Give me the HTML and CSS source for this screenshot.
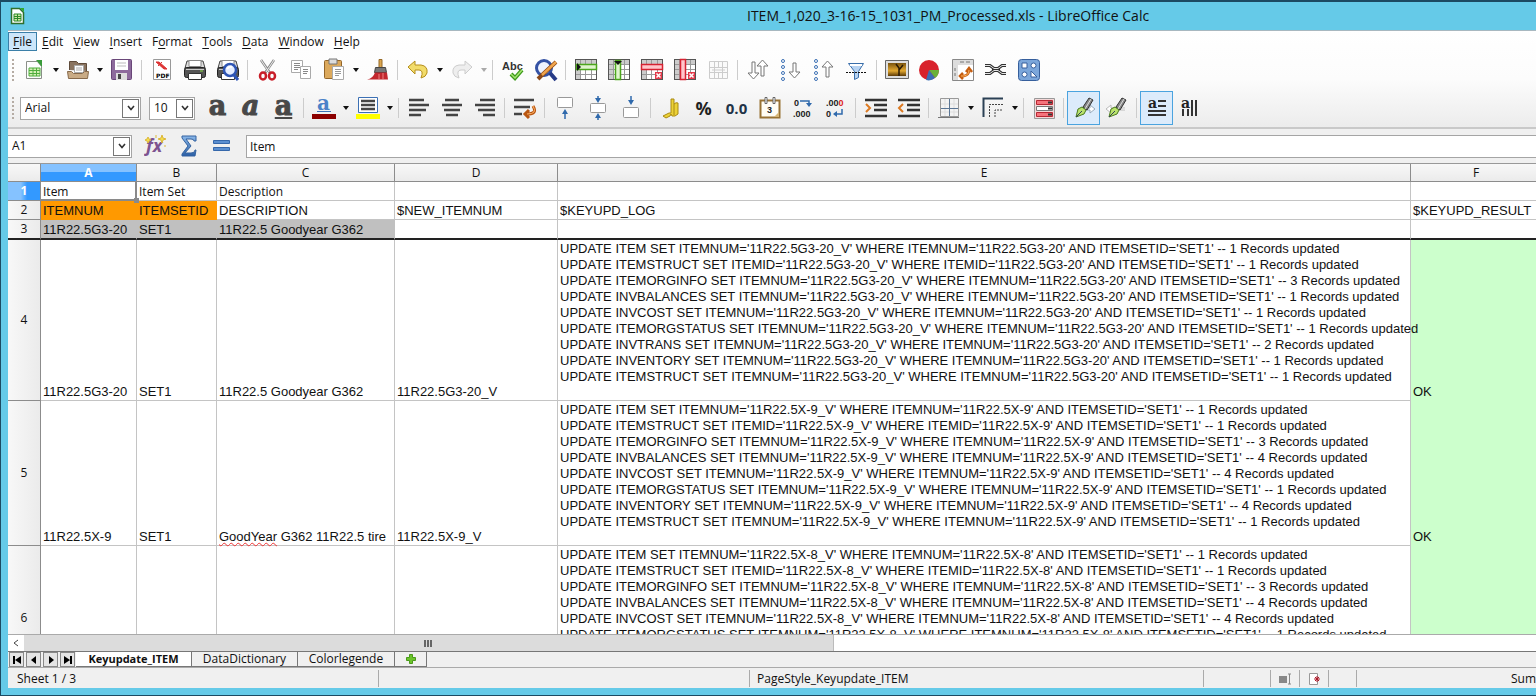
FILE: index.html
```html
<!DOCTYPE html>
<html lang="en">
<head>
<meta charset="utf-8">
<title>ITEM_1,020_3-16-15_1031_PM_Processed.xls - LibreOffice Calc</title>
<link rel="stylesheet" href="styles.css">
</head>
<body>
<svg class="defs" aria-hidden="true">
  <defs>
    <linearGradient id="blue" x1="0" y1="0" x2="0" y2="1"><stop offset="0" stop-color="#8ab8ea"/><stop offset="1" stop-color="#2a5fa5"/></linearGradient>
    <linearGradient id="gold" x1="0" y1="0" x2="0" y2="1"><stop offset="0" stop-color="#7a5410"/><stop offset=".6" stop-color="#e2a830"/><stop offset="1" stop-color="#5c3a08"/></linearGradient>
    <symbol id="grid" viewBox="0 0 24 24"><rect x="1.500" y="1.500" width="21" height="20" fill="#fff" stroke="#555"/><path d="M2 2h20v4H2zM2 6h4v15H2z" fill="#ccc"/><path d="M2 6.500h20M2 11.500h20M2 16.500h20M6.500 2v19M11.500 2v19M17.500 2v19" stroke="#999"/></symbol>
    <symbol id="printer" viewBox="0 0 24 24"><path d="M4 3h16l2 7H2z" fill="#ddd" stroke="#444"/><path d="M6 2.500h12v6H6z" fill="#fff" stroke="#888"/><rect x="1.500" y="9.500" width="21" height="10" rx="2" fill="#555" stroke="#222"/><path d="M3 11.500h18" stroke="#ccc"/><path d="M5.500 15.500h13v6h-13z" fill="#fff" stroke="#333"/><path d="M17 13h3" stroke="#8d4" /></symbol>
    <symbol id="pen" viewBox="0 0 24 24"><path d="M17 2l4 2-6 10-4-3z" fill="#888" stroke="#333"/><path d="M19 3l-6 10" stroke="#ddd"/><path d="M10 11l4 3-2 4-8 3 2-8z" fill="#b9e26c" stroke="#4a7a1c"/><path d="M4 21l6-6" stroke="#345"/></symbol>
    <symbol id="drop" viewBox="0 0 8 6"><path d="M1 1h6L4 5z" fill="currentColor"/></symbol>
    <symbol id="chev" viewBox="0 0 10 8"><path d="M2 2l3 3.500L8 2" fill="none" stroke="#333" stroke-width="1.600"/></symbol>
  </defs>
</svg>
<div class="window">
  <header class="titlebar">
    <svg class="app-icon" viewBox="0 0 18 18"><path d="M2.500 1.500h8l4 4v11h-12z" fill="#fff" stroke="#2f6f2a" stroke-width="1.500"/><path d="M11 1h4v4z" fill="#2faa2f"/><path d="M5 7h7v7H5zM5 9.500h7M5 11.500h7M8.500 7v7" fill="#cfe8a0" stroke="#2d8a2a"/></svg>
    <h1 class="title">ITEM_1,020_3-16-15_1031_PM_Processed.xls - LibreOffice Calc</h1>
  </header>
  <div class="client">
    <div class="bars">
      <nav class="menu">
        <button class="menu-item open"><u>F</u>ile</button><button class="menu-item"><u>E</u>dit</button><button class="menu-item"><u>V</u>iew</button><button class="menu-item"><u>I</u>nsert</button><button class="menu-item">F<u>o</u>rmat</button><button class="menu-item"><u>T</u>ools</button><button class="menu-item"><u>D</u>ata</button><button class="menu-item"><u>W</u>indow</button><button class="menu-item"><u>H</u>elp</button>
      </nav>
      <div class="toolbar" role="toolbar" aria-label="Standard">
        <span class="grip"></span>
        <button class="tool" aria-label="New"><svg viewBox="0 0 24 24"><path d="M4.500 3.500h11l4 5v12h-15z" fill="#fdfdfd" stroke="#8a8f88"/><path d="M14 2h6v7z" fill="#3a9c3a"/><path d="M7 10h11v8H7zM7 12.500h11M7 15.500h11M11 10v8M14.500 10v8" fill="#d5efb5" stroke="#4fae3d"/></svg></button><button class="more" aria-label="New options"><svg><use href="#drop"/></svg></button>
        <button class="tool" aria-label="Open"><svg viewBox="0 0 24 24"><path d="M3.500 12V3.500h7l2 2h8V13" fill="#8a7460" stroke="#5f4b3a"/><path d="M8.500 7.500h9v7h-9z" fill="#fff" stroke="#aaa"/><path d="M10 10h6M10 12h6" stroke="#aaa"/><path d="M1.500 13.500h4l2 2h9l2-2h4l-1 7h-19z" fill="#c9ab85" stroke="#86694a"/></svg></button><button class="more" aria-label="Open options"><svg><use href="#drop"/></svg></button>
        <button class="tool" aria-label="Save"><svg viewBox="0 0 24 24"><rect x="1.500" y="1.500" width="20" height="20" rx="1" fill="#8d6a9c" stroke="#694678"/><path d="M5 2h13v10H5z" fill="#fff"/><path d="M7 5h9M7 8h9" stroke="#bbb"/><path d="M6 15h11v7H6z" fill="#ddd"/><path d="M8 16h3v5H8z" fill="#444"/></svg></button>
        <span class="sep"></span>
        <button class="tool" aria-label="Export as PDF"><svg viewBox="0 0 24 24"><path d="M3.500 1.500h17v20h-17z" fill="#fff" stroke="#999"/><path d="M6 4l3 0 8 7-3 0zM8 8l4-4" fill="#d33" stroke="#d33"/><text x="6" y="20" class="icon-pdf">PDF</text></svg></button>
        <button class="tool" aria-label="Print"><svg><use href="#printer"/></svg></button>
        <button class="tool" aria-label="Print preview"><svg viewBox="0 0 24 24"><use href="#printer"/><circle cx="14" cy="12" r="6" fill="#e4edff" stroke="#2e55b4" stroke-width="2.500"/><path d="M18 17l4 5" stroke="#2e55b4" stroke-width="3"/><path d="M11 11q2-3 5-2" stroke="#fff" stroke-width="2" fill="none"/></svg></button>
        <span class="sep"></span>
        <button class="tool" aria-label="Cut"><svg viewBox="0 0 24 24"><path d="M5 2l9 13M18 2L9 15" stroke="#888" stroke-width="2.500"/><path d="M5 2l8 12M18 2l-8 12" stroke="#eee"/><ellipse cx="7" cy="18" rx="3" ry="3.500" fill="none" stroke="#c81e28" stroke-width="2.500"/><ellipse cx="16" cy="18" rx="3" ry="3.500" fill="none" stroke="#c81e28" stroke-width="2.500"/></svg></button>
        <button class="tool" aria-label="Copy"><svg viewBox="0 0 24 24"><path d="M2.500 2.500h11v12h-11z" fill="#fff" stroke="#aaa"/><path d="M5 5.500h6M5 7.500h6M5 9.500h6M5 11.500h4" stroke="#888"/><path d="M11.500 8.500h10v12h-10z" fill="#fff" stroke="#aaa"/><path d="M14 11.500h5M14 13.500h5M14 15.500h4" stroke="#888"/></svg></button>
        <button class="tool" aria-label="Paste"><svg viewBox="0 0 24 24"><rect x="2.500" y="2.500" width="17" height="18" rx="1" fill="#dca95c" stroke="#94662a"/><path d="M7 1h8v5H7z" fill="#ddd" stroke="#777"/><path d="M10.500 8.500h11v13h-11z" fill="#fff" stroke="#aaa"/><path d="M13 11.500h6M13 13.500h6M13 15.500h6M13 17.500h4" stroke="#999"/></svg></button><button class="more" aria-label="Paste options"><svg><use href="#drop"/></svg></button>
        <button class="tool" aria-label="Clone formatting"><svg viewBox="0 0 24 24"><path d="M13 1.500h3v8h-3z" fill="#dba650" stroke="#976a26"/><path d="M9.500 9.500h10l1 5h-12z" fill="#777" stroke="#444"/><path d="M9 14.500h12l1 7H1q6-1 8-7z" fill="#c2282e"/><path d="M13 16v5M17 15v6" stroke="#f08080"/></svg></button>
        <span class="sep"></span>
        <button class="tool" aria-label="Undo"><svg viewBox="0 0 24 24"><path d="M2 9l7-6v4h6q7 1 6 8-1 4-6 5 3-8-2-8H9v4z" fill="#f2dc6a" stroke="#b58e1c"/></svg></button><button class="more" aria-label="Undo list"><svg><use href="#drop"/></svg></button>
        <button class="tool" aria-label="Redo" disabled><svg viewBox="0 0 24 24"><path d="M22 9l-7-6v4H9q-7 1-6 8 1 4 6 5-3-8 2-8h4v4z" fill="#eee" stroke="#ccc"/></svg></button><button class="more dim" aria-label="Redo list" disabled><svg><use href="#drop"/></svg></button>
        <span class="sep"></span>
        <button class="tool" aria-label="Spelling"><svg viewBox="0 0 24 24"><text x="1" y="12" class="icon-abc">Abc</text><path d="M10 16l4 4 7-8" fill="none" stroke="#3d9a1c" stroke-width="4"/><path d="M10 16l4 4 7-8" fill="none" stroke="#a5e470" stroke-width="1.500"/></svg></button>
        <button class="tool" aria-label="Find and replace"><svg viewBox="0 0 24 24"><circle cx="10" cy="10" r="7.500" fill="#eef3ff" stroke="#3452a4" stroke-width="3"/><path d="M16 15l6 7" stroke="#263a86" stroke-width="4"/><path d="M22 4L7 18l-3 3" stroke="#8c4a18" stroke-width="4"/><path d="M22 4L8 17" stroke="#f0a44c" stroke-width="2.500"/></svg></button>
        <span class="sep"></span>
        <button class="tool" aria-label="Insert row"><svg viewBox="0 0 24 24"><use href="#grid"/><path d="M2.500 6.500h20v5h-20z" fill="#dff5cc" stroke="#4ca61c" stroke-width="1.500"/><path d="M3 5v8l4-4z" fill="#111"/></svg></button>
        <button class="tool" aria-label="Insert column"><svg viewBox="0 0 24 24"><use href="#grid"/><path d="M8.500 2.500h5v19h-5z" fill="#dff5cc" stroke="#4ca61c" stroke-width="1.500"/><path d="M7 3h8l-4 4z" fill="#111"/></svg></button>
        <button class="tool" aria-label="Delete row"><svg viewBox="0 0 24 24"><use href="#grid"/><path d="M1.500 6.500h21v5h-21z" fill="#ffc6cb" stroke="#d62232" stroke-width="1.500"/><path d="M15 14h7v7h-7z" fill="#e4394a"/><path d="M16.500 15.500l4 4m0-4l-4 4" stroke="#fff" stroke-width="1.500"/></svg></button>
        <button class="tool" aria-label="Delete column"><svg viewBox="0 0 24 24"><use href="#grid"/><path d="M7.500 1.500h5v20h-5z" fill="#ffc6cb" stroke="#d62232" stroke-width="1.500"/><path d="M15 14h7v7h-7z" fill="#e4394a"/><path d="M16.500 15.500l4 4m0-4l-4 4" stroke="#fff" stroke-width="1.500"/></svg></button>
        <button class="tool" aria-label="Merge cells" disabled><svg viewBox="0 0 24 24"><path d="M3.500 3.500h18v17h-18zM3.500 9.500h18M3.500 14.500h18M8.500 3.500v17M12.500 3.500v6M12.500 15v5M16.500 3.500v17M6 12h13" fill="#fafafa" stroke="#ccc"/></svg></button>
        <span class="sep"></span>
        <button class="tool" aria-label="Sort"><svg viewBox="0 0 24 24"><path d="M6 4h3v11h4l-5.500 6L2 15h4zM15 18V8h-4l5.500-6L22 8h-4v10z" fill="#fff" stroke="#777"/></svg></button>
        <button class="tool" aria-label="Sort ascending"><svg viewBox="0 0 24 24"><path d="M14 5h3v9h4l-5.500 6-5.500-6h4z" fill="#fff" stroke="#777"/><g fill="#fff" stroke="#3c70b4"><circle cx="4" cy="3" r="1.500"/><circle cx="4" cy="9" r="1.500"/><circle cx="4" cy="15" r="1.500"/><circle cx="4" cy="21" r="1.500"/></g></svg></button>
        <button class="tool" aria-label="Sort descending"><svg viewBox="0 0 24 24"><path d="M14 19V9h-4l5.500-6L21 9h-4v10z" fill="#fff" stroke="#777"/><g fill="#fff" stroke="#3c70b4"><circle cx="4" cy="3" r="1.500"/><circle cx="4" cy="9" r="1.500"/><circle cx="4" cy="15" r="1.500"/><circle cx="4" cy="21" r="1.500"/></g></svg></button>
        <button class="tool" aria-label="AutoFilter"><svg viewBox="0 0 24 24"><path d="M3.500 5.500h15l-5 8v6l-4 2v-8z" fill="#b7d3f2" stroke="#3a6eaa"/><path d="M5 7h12" stroke="#fff" stroke-width="2"/><path d="M1 14.500h21" stroke="#111" stroke-dasharray="2 1"/></svg></button>
        <span class="sep"></span>
        <button class="tool" aria-label="Insert image"><svg viewBox="0 0 24 24"><path d="M.5 2.500h23v18H.5z" fill="#ddd" stroke="#666"/><path d="M3 5h18v13H3z" fill="url(#gold)"/><path d="M14 18V10l-3-4m3 6l4-5" stroke="#2a1a04" stroke-width="1.500" fill="none"/></svg></button>
        <button class="tool" aria-label="Insert chart"><svg viewBox="0 0 24 24"><circle cx="11" cy="12" r="10" fill="#d8222c"/><path d="M11 12h10a10 10 0 0 1-4 8z" fill="#69b23a"/><path d="M11 12l6 8a10 10 0 0 1-9 2z" fill="#3c6fb6"/></svg></button>
        <button class="tool" aria-label="Pivot table"><svg viewBox="0 0 24 24"><path d="M1.500 1.500h21v21h-21z" fill="#fff" stroke="#888"/><path d="M2 2h20v5H2zM2 7h5v15H2z" fill="#ddd"/><path d="M9 4h4M15 4h4M4 10v3M4 15v3" stroke="#777"/><path d="M9 18h4q5-1 5-6M12 15l-3 3 3 3M15 14l3-4 3 4" fill="none" stroke="#c65e10" stroke-width="2.500"/><path d="M10 18h3q5-1 5-6" fill="none" stroke="#ffb45c"/></svg></button>
        <button class="tool" aria-label="Hyperlink"><svg viewBox="0 0 24 24"><path d="M1 7.500h5l4 3H14l4-3h4M1 15.500h5l4-3H14l4 3h4" fill="none" stroke="#333" stroke-width="3"/><path d="M1 7.500h5l4 3H14l4-3h4M1 15.500h5l4-3H14l4 3h4" fill="none" stroke="#e4e4e4"/><path d="M8 11.500h8" stroke="#333"/></svg></button>
        <button class="tool" aria-label="Gallery"><svg viewBox="0 0 24 24"><rect x="1.500" y="1.500" width="21" height="21" rx="3" fill="#7ba6da" stroke="#365f9c"/><g fill="#fff" stroke="#365f9c"><path d="M5 5h5v5H5zM14 19v-6l6 6z"/><circle cx="16.500" cy="7.500" r="2.500"/><circle cx="7.500" cy="16.500" r="2.500"/></g></svg></button>
      </div>
      <div class="toolbar format" role="toolbar" aria-label="Formatting">
        <span class="grip"></span>
        <span class="combo font-name"><select aria-label="Font name"><option>Arial</option></select><span class="combo-btn"><svg><use href="#chev"/></svg></span></span>
        <span class="combo font-size"><select aria-label="Font size"><option>10</option></select><span class="combo-btn"><svg><use href="#chev"/></svg></span></span>
        <span class="style-tools"><button class="tool glyph" aria-label="Bold">a</button><button class="tool glyph slanted" aria-label="Italic">a</button><button class="tool glyph underlined" aria-label="Underline">a</button></span>
        <span class="sep"></span>
        <button class="tool" aria-label="Font colour"><svg viewBox="0 0 24 24"><text x="5" y="14" class="icon-a">a</text><path d="M5 15.500h14" stroke="#3c70b4"/><path d="M0 18h24v5H0z" fill="#8b0000"/></svg></button><button class="more" aria-label="Font colour options"><svg><use href="#drop"/></svg></button>
        <button class="tool" aria-label="Background colour"><svg viewBox="0 0 24 24"><path d="M2.500 1.500h19v15h-19z" fill="#fff" stroke="#3c70b4"/><path d="M5 5h14M5 9h14M5 13h14" stroke="#444" stroke-width="2.500"/><path d="M0 18h24v5H0z" fill="#ff0"/></svg></button><button class="more" aria-label="Background colour options"><svg><use href="#drop"/></svg></button>
        <span class="sep"></span>
        <button class="tool" aria-label="Align left"><svg viewBox="0 0 24 24"><path d="M2 4h15M2 9h20M2 14h17M2 19h12" stroke="#444" stroke-width="2.500"/></svg></button>
        <button class="tool" aria-label="Align centre"><svg viewBox="0 0 24 24"><path d="M5 4h14M2 9h20M4 14h16M6 19h12" stroke="#444" stroke-width="2.500"/></svg></button>
        <button class="tool" aria-label="Align right"><svg viewBox="0 0 24 24"><path d="M7 4h15M2 9h20M5 14h17M10 19h12" stroke="#444" stroke-width="2.500"/></svg></button>
        <span class="sep"></span>
        <button class="tool" aria-label="Wrap text"><svg viewBox="0 0 24 24"><path d="M1 4h20M1 11h16M1 18h8" stroke="#444" stroke-width="2.500"/><path d="M20 10q5 8-6 8M16 14l-4 4 4 4" fill="none" stroke="#b85510" stroke-width="3"/><path d="M20 10q5 8-6 8" fill="none" stroke="#ffb56a"/></svg></button>
        <span class="sep"></span>
        <button class="tool" aria-label="Align top"><svg viewBox="0 0 24 24"><rect x="4.500" y="1.500" width="15" height="10" rx="1" fill="#fff" stroke="#999"/><path d="M12 23v-7" stroke="#2f69ac" stroke-width="1.500"/><path d="M9 18l3-5 3 5z" fill="#2f69ac"/></svg></button>
        <button class="tool" aria-label="Centre vertically"><svg viewBox="0 0 24 24"><rect x="4.500" y="7.500" width="15" height="9" rx="1" fill="#fff" stroke="#999"/><path d="M12 0v4M12 24v-4" stroke="#2f69ac" stroke-width="1.500"/><path d="M9 2l3 5 3-5zM9 22l3-5 3 5z" fill="#2f69ac"/></svg></button>
        <button class="tool" aria-label="Align bottom"><svg viewBox="0 0 24 24"><rect x="4.500" y="11.500" width="15" height="10" rx="1" fill="#fff" stroke="#999"/><path d="M12 0v7" stroke="#2f69ac" stroke-width="1.500"/><path d="M9 4l3 5 3-5z" fill="#2f69ac"/></svg></button>
        <span class="sep"></span>
        <button class="tool" aria-label="Currency"><svg viewBox="0 0 24 24"><path d="M12 3h3v5q2-2 4-1v11l-3 2h-3l-1-2-1 2-4 2-3-2 6-3h2z" fill="#ecd136" stroke="#a98a12"/><path d="M15 8v11" stroke="#a98a12"/></svg></button>
        <button class="tool symbol" aria-label="Percent">%</button>
        <button class="tool symbol number" aria-label="Number">0.0</button>
        <button class="tool" aria-label="Date"><svg viewBox="0 0 24 24"><path d="M2.500 4.500h19v17h-19z" fill="#fffdf4" stroke="#987233" stroke-width="2"/><path d="M7 1.500h2v6H7zM15 1.500h2v6h-2z" fill="#fff" stroke="#666"/><path d="M16 21l5-5v5z" fill="#d6b676"/><text x="9" y="17" class="icon-num">3</text></svg></button>
        <button class="tool" aria-label="Add decimal place"><svg viewBox="0 0 24 24"><text x="3" y="10" class="icon-num">0</text><text x="2" y="21" class="icon-num">.000</text><path d="M9 5h9v4" fill="none" stroke="#2f69ac" stroke-width="1.500"/><path d="M15 7l3 4 3-4z" fill="#2f69ac"/></svg></button>
        <button class="tool" aria-label="Delete decimal place"><svg viewBox="0 0 24 24"><text x="2" y="10" class="icon-num">.00<tspan fill="#d22">0</tspan></text><text x="2" y="21" class="icon-num">0</text><path d="M18 13v5h-6" fill="none" stroke="#2f69ac" stroke-width="1.500"/><path d="M13 15l-4 3 4 3z" fill="#2f69ac"/></svg></button>
        <span class="sep"></span>
        <button class="tool" aria-label="Increase indent"><svg viewBox="0 0 24 24"><path d="M1 4h22M10 9h13M10 14h13M1 20h22" stroke="#333" stroke-width="2.500"/><path d="M2 8l4 4-4 4" fill="none" stroke="#dc7a22" stroke-width="2"/></svg></button>
        <button class="tool" aria-label="Decrease indent"><svg viewBox="0 0 24 24"><path d="M1 4h22M10 9h13M10 14h13M1 20h22" stroke="#333" stroke-width="2.500"/><path d="M6 8l-4 4 4 4" fill="none" stroke="#dc7a22" stroke-width="2"/></svg></button>
        <span class="sep"></span>
        <button class="tool" aria-label="Borders"><svg viewBox="0 0 24 24"><path d="M3.500 2.500h18v18h-18z" fill="#f3f3f3" stroke="#999"/><path d="M4 8h17M4 16h17M8 3v17M17 3v17" stroke="#ddd"/><path d="M12.500 3v17M4 12.500h17" stroke="#5b7695"/><path d="M1 21.500h21" stroke="#777"/></svg></button><button class="more" aria-label="Border options"><svg><use href="#drop"/></svg></button>
        <button class="tool" aria-label="Border style"><svg viewBox="0 0 24 24"><path d="M2.500 21V2.500H22" fill="none" stroke="#2b4055" stroke-width="2"/><path d="M8.500 21V8.500H22M14 21v-7h8" fill="none" stroke="#444" stroke-dasharray="2 1"/></svg></button><button class="more" aria-label="Border style options"><svg><use href="#drop"/></svg></button>
        <span class="sep"></span>
        <button class="tool" aria-label="Conditional formatting"><svg viewBox="0 0 24 24"><path d="M2.500 2.500h20v20h-20z" fill="#f5d7d7" stroke="#999"/><g fill="#f5747c" stroke="#b92632"><path d="M4.500 4.500h16v4h-16zM4.500 16.500h16v4h-16z"/><path d="M4.500 10.500h16v4h-16z" fill="#fff" stroke="#777"/></g><path d="M16 6.500h4M16 12.500h4M16 18.500h4" stroke="#333" stroke-width="2"/></svg></button>
        <span class="sep"></span>
        <button class="tool active" aria-label="Left to right" aria-pressed="true"><svg viewBox="0 0 24 24"><path d="M10 12h8V9l5 4-5 4v-3h-8" fill="#fff" stroke="#9ab"/><use href="#pen"/></svg></button>
        <button class="tool" aria-label="Right to left"><svg viewBox="0 0 24 24"><path d="M20 12H6V9l-5 4 5 4v-3h14" fill="#fff" stroke="#bbb"/><use href="#pen"/></svg></button>
        <span class="sep"></span>
        <button class="tool active" aria-label="Text direction horizontal" aria-pressed="true"><svg viewBox="0 0 24 24"><text x="3" y="12" class="icon-dir">a</text><path d="M13 5h8M13 10h8M3 15h18M3 19h18" stroke="#333" stroke-width="2"/></svg></button>
        <button class="tool" aria-label="Text direction vertical"><svg viewBox="0 0 24 24"><text x="3" y="12" class="icon-dir">a</text><path d="M5 13v7M10 13v7M14 4v16M18 4v16" stroke="#333" stroke-width="2"/></svg></button>
      </div>
    </div>
    <div class="formula-bar">
      <span class="combo name-box"><input type="text" value="A1" aria-label="Name box"><button class="combo-btn" aria-label="Named ranges"><svg><use href="#chev"/></svg></button></span>
      <button class="tool" aria-label="Function wizard"><svg viewBox="0 0 24 24"><text x="2" y="18" class="icon-fx">fx</text><path d="M18 1l1 3 3 1-3 1-1 3-1-3-3-1 3-1zM4 3l1 2 2 1-2 1-1 2-1-2-2-1 2-1zM12 1v3M21 11v2" fill="#f4dc4a" stroke="#dcb83a"/></svg></button>
      <button class="tool" aria-label="Sum"><svg viewBox="0 0 24 24"><path d="M5 2h14v5h-2q0-2-3-2H9l5 7-6 7h6q4 0 4-3h1l-1 6H5v-2l6-8-6-8z" fill="url(#blue)" stroke="#3563a0"/></svg></button>
      <button class="tool" aria-label="Function"><svg viewBox="0 0 24 24"><path d="M3.500 6.500h16v3h-16zM3.500 13.500h16v3h-16z" fill="#5b8fd0" stroke="#3668ab"/></svg></button>
      <input class="formula" type="text" value="Item" aria-label="Input line">
    </div>
    <div class="sheet">
      <table class="cells">
        <colgroup><col class="w-head"><col class="w-a"><col class="w-b"><col class="w-c"><col class="w-d"><col class="w-e"><col class="w-f"></colgroup>
        <thead><tr><th></th><th class="current">A</th><th>B</th><th>C</th><th>D</th><th>E</th><th>F</th></tr></thead>
        <tbody>
          <tr class="label-row"><th class="current">1</th><td class="cursor">Item<span class="handle"></span></td><td>Item Set</td><td>Description</td><td></td><td></td><td></td></tr>
          <tr><th>2</th><td class="key">ITEMNUM</td><td class="key">ITEMSETID</td><td>DESCRIPTION</td><td>$NEW_ITEMNUM</td><td>$KEYUPD_LOG</td><td>$KEYUPD_RESULT</td></tr>
          <tr class="frozen"><th>3</th><td class="old">11R22.5G3-20</td><td class="old">SET1</td><td class="old">11R22.5 Goodyear G362</td><td></td><td></td><td></td></tr>
          <tr class="r4"><th>4</th><td>11R22.5G3-20</td><td>SET1</td><td>11R22.5 Goodyear G362</td><td>11R22.5G3-20_V</td><td class="log">UPDATE ITEM SET ITEMNUM='11R22.5G3-20_V' WHERE ITEMNUM='11R22.5G3-20' AND ITEMSETID='SET1' -- 1 Records updated
UPDATE ITEMSTRUCT SET ITEMID='11R22.5G3-20_V' WHERE ITEMID='11R22.5G3-20' AND ITEMSETID='SET1' -- 1 Records updated
UPDATE ITEMORGINFO SET ITEMNUM='11R22.5G3-20_V' WHERE ITEMNUM='11R22.5G3-20' AND ITEMSETID='SET1' -- 3 Records updated
UPDATE INVBALANCES SET ITEMNUM='11R22.5G3-20_V' WHERE ITEMNUM='11R22.5G3-20' AND ITEMSETID='SET1' -- 1 Records updated
UPDATE INVCOST SET ITEMNUM='11R22.5G3-20_V' WHERE ITEMNUM='11R22.5G3-20' AND ITEMSETID='SET1' -- 1 Records updated
UPDATE ITEMORGSTATUS SET ITEMNUM='11R22.5G3-20_V' WHERE ITEMNUM='11R22.5G3-20' AND ITEMSETID='SET1' -- 1 Records updated
UPDATE INVTRANS SET ITEMNUM='11R22.5G3-20_V' WHERE ITEMNUM='11R22.5G3-20' AND ITEMSETID='SET1' -- 2 Records updated
UPDATE INVENTORY SET ITEMNUM='11R22.5G3-20_V' WHERE ITEMNUM='11R22.5G3-20' AND ITEMSETID='SET1' -- 1 Records updated
UPDATE ITEMSTRUCT SET ITEMNUM='11R22.5G3-20_V' WHERE ITEMNUM='11R22.5G3-20' AND ITEMSETID='SET1' -- 1 Records updated</td><td class="ok">OK</td></tr>
          <tr class="r5"><th>5</th><td>11R22.5X-9</td><td>SET1</td><td><span class="misspelt">GoodYear</span> G362 11R22.5 tire</td><td>11R22.5X-9_V</td><td class="log">UPDATE ITEM SET ITEMNUM='11R22.5X-9_V' WHERE ITEMNUM='11R22.5X-9' AND ITEMSETID='SET1' -- 1 Records updated
UPDATE ITEMSTRUCT SET ITEMID='11R22.5X-9_V' WHERE ITEMID='11R22.5X-9' AND ITEMSETID='SET1' -- 1 Records updated
UPDATE ITEMORGINFO SET ITEMNUM='11R22.5X-9_V' WHERE ITEMNUM='11R22.5X-9' AND ITEMSETID='SET1' -- 3 Records updated
UPDATE INVBALANCES SET ITEMNUM='11R22.5X-9_V' WHERE ITEMNUM='11R22.5X-9' AND ITEMSETID='SET1' -- 4 Records updated
UPDATE INVCOST SET ITEMNUM='11R22.5X-9_V' WHERE ITEMNUM='11R22.5X-9' AND ITEMSETID='SET1' -- 4 Records updated
UPDATE ITEMORGSTATUS SET ITEMNUM='11R22.5X-9_V' WHERE ITEMNUM='11R22.5X-9' AND ITEMSETID='SET1' -- 1 Records updated
UPDATE INVENTORY SET ITEMNUM='11R22.5X-9_V' WHERE ITEMNUM='11R22.5X-9' AND ITEMSETID='SET1' -- 4 Records updated
UPDATE ITEMSTRUCT SET ITEMNUM='11R22.5X-9_V' WHERE ITEMNUM='11R22.5X-9' AND ITEMSETID='SET1' -- 1 Records updated</td><td class="ok">OK</td></tr>
          <tr class="r5"><th>6</th><td></td><td></td><td></td><td></td><td class="log">UPDATE ITEM SET ITEMNUM='11R22.5X-8_V' WHERE ITEMNUM='11R22.5X-8' AND ITEMSETID='SET1' -- 1 Records updated
UPDATE ITEMSTRUCT SET ITEMID='11R22.5X-8_V' WHERE ITEMID='11R22.5X-8' AND ITEMSETID='SET1' -- 1 Records updated
UPDATE ITEMORGINFO SET ITEMNUM='11R22.5X-8_V' WHERE ITEMNUM='11R22.5X-8' AND ITEMSETID='SET1' -- 3 Records updated
UPDATE INVBALANCES SET ITEMNUM='11R22.5X-8_V' WHERE ITEMNUM='11R22.5X-8' AND ITEMSETID='SET1' -- 4 Records updated
UPDATE INVCOST SET ITEMNUM='11R22.5X-8_V' WHERE ITEMNUM='11R22.5X-8' AND ITEMSETID='SET1' -- 4 Records updated
UPDATE ITEMORGSTATUS SET ITEMNUM='11R22.5X-8_V' WHERE ITEMNUM='11R22.5X-8' AND ITEMSETID='SET1' -- 1 Records updated</td><td class="ok"></td></tr>
        </tbody>
      </table>
    </div>
    <div class="scroll">
      <button class="scroll-btn" aria-label="Scroll left"><svg viewBox="0 0 8 8"><path d="M6 1L2 4l4 3" fill="none" stroke="#444"/></svg></button>
      <div class="thumb"><i></i><i></i><i></i></div>
    </div>
    <div class="tabs">
      <button class="nav" aria-label="First sheet"><svg viewBox="0 0 10 10"><path d="M1 1h2v8H1zM9 1v8L3 5z"/></svg></button>
      <button class="nav" aria-label="Previous sheet"><svg viewBox="0 0 10 10"><path d="M7 1v8L2 5z"/></svg></button>
      <button class="nav" aria-label="Next sheet"><svg viewBox="0 0 10 10"><path d="M3 1v8l5-4z"/></svg></button>
      <button class="nav" aria-label="Last sheet"><svg viewBox="0 0 10 10"><path d="M7 1h2v8H7zM1 1v8l6-4z"/></svg></button>
      <button class="tab selected">Keyupdate_ITEM</button>
      <button class="tab dictionary">DataDictionary</button>
      <button class="tab legend">Colorlegende</button>
      <button class="tab add" aria-label="Add sheet"><svg viewBox="0 0 12 12"><path d="M4.500 1.500h3v3h3v3h-3v3h-3v-3h-3v-3h3z" fill="#6cc42c" stroke="#4a9a1a"/></svg></button>
    </div>
    <footer class="status">
      <span class="cell sheet-no">Sheet 1 / 3</span>
      <span class="cell empty"></span>
      <span class="cell style">PageStyle_Keyupdate_ITEM</span>
      <span class="cell lang"></span>
      <span class="cell icon"><svg viewBox="0 0 14 12"><path d="M1 3h8v7H1z" fill="#888"/><path d="M10 1h3M11.500 1v10M10 11h3" stroke="#888"/></svg></span>
      <span class="cell icon"><svg viewBox="0 0 14 12"><path d="M2.500.5h8v11h-8z" fill="#fff" stroke="#999"/><path d="M7 6h6M10 3v6M8 4l4 4M12 4L8 8" stroke="#b01828"/></svg></span>
      <span class="cell sign"></span>
      <span class="cell sum">Sum</span>
    </footer>
  </div>
</div>
</body>
</html>
```
FILE: styles.css
```css
* { box-sizing: border-box; }
body { margin: 0; height: 100vh; overflow: hidden; font: 12px/16px "Open Sans", "Noto Sans", sans-serif; color: #111; }
button, input, select { font: inherit; color: inherit; margin: 0; padding: 0; border: 0; background: none; border-radius: 0; }
.defs { display: block; width: 0; height: 0; position: absolute; }

.window { height: 100%; display: flex; flex-direction: column; background: #65cae8; border: solid #1c4a62; border-width: 2px 0 1px 1px; padding: 0 0 7px 7px; }
.titlebar { flex: none; display: flex; align-items: center; height: 28px; }
.app-icon { width: 18px; height: 18px; margin-left: 1px; }
.title { margin: 0 0 0 720px; font-size: 14px; line-height: 20px; font-weight: 400; white-space: nowrap; }
.client { flex: 1; min-height: 0; display: flex; flex-direction: column; background: #f0f0f0; overflow: hidden; }

.bars { flex: none; background: linear-gradient(#fff, #fcfcfc 50%, #ececec); border-bottom: 2px solid #c9c9c9; border-top: 1px solid #a8b8c0; padding-top: 1px; }
.menu { display: flex; height: 19px; }
.menu-item { padding: 0 4px; border: 1px solid transparent; white-space: nowrap; }
.menu-item.open { background: #cce6fa; border-color: #3b7fa8; }
.menu-item u { text-underline-offset: 2px; }
.toolbar { display: flex; align-items: center; height: 38px; }
.grip { flex: none; width: 2px; height: 22px; margin: 0 3px 0 4px; border-left: 2px dotted #b5aca4; }
.format .grip { margin-right: 6px; }
.tool { flex: none; width: 33px; height: 34px; display: flex; align-items: center; justify-content: center; border: 1px solid transparent; }
.tool svg { width: 24px; height: 24px; }
.tool.active { background: #dcebfb; border-color: #4aa3df; }
.more { flex: none; width: 11px; height: 34px; display: flex; align-items: center; justify-content: center; }
.more svg { width: 8px; height: 6px; }
.more.dim { color: #aaa; }
.sep { flex: none; width: 7px; height: 20px; background: linear-gradient(#ccc, #ccc) center / 1px 100% no-repeat; }

.combo { flex: none; display: flex; height: 23px; background: #fff; border: 1px solid #a5a5a5; padding: 1px; }
.combo select, .combo input { flex: 1; min-width: 0; appearance: none; padding-left: 3px; outline: 0; }
.combo-btn { width: 17px; display: flex; align-items: center; justify-content: center; border: 1px solid #777; background: #fff; }
.combo-btn svg { width: 10px; height: 8px; }
.font-name { width: 121px; margin-right: 8px; }
.font-size { width: 46px; }
.style-tools { display: flex; padding-left: 6px; }
.glyph { font: 700 27px/28px "DejaVu Serif", serif; color: #484848; -webkit-text-stroke: 1px #484848; padding-bottom: 4px; }
.slanted { font-style: italic; }
.underlined { text-decoration: underline; text-decoration-thickness: 2px; text-underline-offset: 2px; }
.symbol { font: 700 18px/24px "Open Sans", sans-serif; color: #222; }
.number { font-size: 15px; color: #1f3347; }

.icon-pdf { font: 700 6px "DejaVu Sans", sans-serif; }
.icon-abc { font: 700 11px "Liberation Sans", sans-serif; fill: #333; }
.icon-a { font: 700 20px/20px "DejaVu Serif", serif; fill: #4a82c8; }
.icon-num { font: 700 9px "Liberation Sans", sans-serif; fill: #222; }
.icon-dir { font: 700 14px "DejaVu Serif", serif; fill: #222; }
.icon-fx { font: italic 700 18px "Open Sans", sans-serif; fill: #7d5390; }

.formula-bar { flex: none; display: flex; align-items: center; height: 34px; }
.name-box { width: 124px; margin-right: 7px; border-left: 0; }
.formula { flex: 1; min-width: 0; height: 23px; margin-left: 8px; padding: 0 3px; background: #fff; border: 1px solid #a5a5a5; border-right: 0; }

.sheet { flex: 1; min-height: 0; overflow: hidden; background: #fff; border-top: 1px solid #999; }
.cells { border-collapse: separate; border-spacing: 0; table-layout: fixed; width: 1534px; }
.w-head { width: 33px; } .w-a { width: 96px; } .w-b { width: 80px; } .w-c { width: 178px; } .w-d { width: 163px; } .w-e { width: 853px; } .w-f { width: 131px; }
.cells th { padding: 0; font-weight: 400; text-align: center; vertical-align: middle; border: solid #8c8c8c; border-width: 0 1px 1px 0; }
.cells thead th { height: 18px; background: linear-gradient(#f8f8f8, #ebebeb); }
.cells tbody th { background: linear-gradient(90deg, #f8f8f8, #ebebeb); }
.cells thead th.current { color: #fff; font-weight: 700; background: linear-gradient(#85c2ff 50%, #3399ff 50%); }
.cells tbody th.current { color: #fff; font-weight: 700; background: linear-gradient(90deg, #85c2ff 40%, #3399ff 60%); }
.cells td { height: 19px; padding: 0 2px; font: 13px/16px "Liberation Sans", Arial, sans-serif; vertical-align: bottom; white-space: nowrap; border: solid #c4c4c4; border-width: 0 1px 1px 0; }
.cells .label-row td { font: 12px/17px "Open Sans", sans-serif; }
.cells .cursor { position: relative; box-shadow: inset -1px -1px #8a8a8a; border-color: #8a8a8a; }
.handle { position: absolute; right: -3px; bottom: -3px; width: 5px; height: 5px; background: #8a8a8a; z-index: 1; }
.cells .key { background: #ff9900; border-color: #ff9900; }
.cells .old { background: #c0c0c0; border-color: #c0c0c0; }
.cells .frozen th, .cells .frozen td { border-bottom: 2px solid #222; height: 20px; }
.r4 { height: 161px; }
.r5 { height: 145px; }
.cells .log { vertical-align: top; white-space: pre; padding-top: 1px; }
.cells .ok { background: #ccffcc; border-color: #ccffcc; }
.misspelt { text-decoration: underline wavy #e33 1px; text-underline-offset: 1px; }

.scroll { flex: none; display: flex; height: 17px; background: #fff; border-top: 1px solid #aaa; }
.scroll-btn { width: 16px; display: flex; align-items: center; justify-content: center; }
.scroll-btn svg { width: 8px; height: 8px; }
.thumb { width: 53%; display: flex; align-items: center; justify-content: center; gap: 1px; background: #dcdcdc; border-right: 1px solid #bbb; }
.thumb i { width: 2px; height: 7px; background: #666; }
.tabs { flex: none; display: flex; height: 17px; border-top: 1px solid #777; border-bottom: 1px solid #aaa; }
.nav { width: 15px; margin: 0 1px; display: flex; align-items: center; justify-content: center; background: #e4e4e4; border: 1px solid #888; }
.nav svg { width: 10px; height: 10px; }
.tab { display: flex; align-items: center; justify-content: center; border: solid #777; border-width: 0 1px 1px 0; line-height: 14px; }
.selected { width: 116px; background: #fff; font-weight: 700; font-size: 11px; }
.dictionary { width: 106px; }
.legend { width: 97px; }
.add { width: 32px; }
.add svg { width: 12px; height: 12px; }
.status { flex: none; display: flex; height: 20px; padding-top: 2px; }
.cell { flex: none; border-right: 1px solid #aaa; display: flex; align-items: center; white-space: nowrap; height: 17px; }
.sheet-no { width: 371px; padding-left: 9px; }
.empty { width: 371px; }
.style { flex: 1; padding-left: 7px; }
.lang { width: 67px; }
.icon { width: 29px; justify-content: center; }
.icon svg { width: 14px; height: 12px; }
.sign { width: 28px; }
.sum { width: 179px; justify-content: flex-end; border: 0; }
```
